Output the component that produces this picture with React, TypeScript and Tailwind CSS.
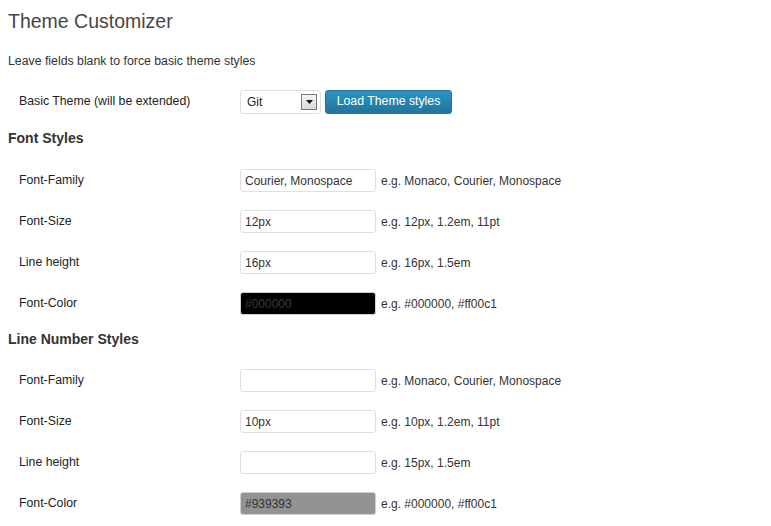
import React from 'react';

type Field = {
  label: string;
  value: string;
  hint: string;
  color?: 'black' | 'gray';
};

const fontStyles: Field[] = [
  { label: 'Font-Family', value: 'Courier, Monospace', hint: 'e.g. Monaco, Courier, Monospace' },
  { label: 'Font-Size', value: '12px', hint: 'e.g. 12px, 1.2em, 11pt' },
  { label: 'Line height', value: '16px', hint: 'e.g. 16px, 1.5em' },
  { label: 'Font-Color', value: '#000000', hint: 'e.g. #000000, #ff00c1', color: 'black' },
];

const lineNumberStyles: Field[] = [
  { label: 'Font-Family', value: '', hint: 'e.g. Monaco, Courier, Monospace' },
  { label: 'Font-Size', value: '10px', hint: 'e.g. 10px, 1.2em, 11pt' },
  { label: 'Line height', value: '', hint: 'e.g. 15px, 1.5em' },
  { label: 'Font-Color', value: '#939393', hint: 'e.g. #000000, #ff00c1', color: 'gray' },
];

const FieldRow = ({ field }: { field: Field }) => {
  let inputClass = 'bg-white border-[#dfdfdf] text-[#333]';
  if (field.color === 'black') inputClass = 'bg-black border-[#cfcfcf] text-[#3a3a3a]';
  if (field.color === 'gray') inputClass = 'bg-[#939393] border-[#cfcfcf] text-[#333]';

  return (
    <div className="flex items-center h-[41px]">
      <div className="w-[232px] pl-[11px] text-[12.3px] text-[#222]">{field.label}</div>
      <input
        type="text"
        defaultValue={field.value}
        className={`w-[136px] h-[23px] px-[4px] border rounded-[3px] outline-none text-[12px] ${inputClass}`}
      />
      <span className="ml-[5px] text-[#333]">{field.hint}</span>
    </div>
  );
};

const App = () => {
  return (
    <div
      className="min-h-screen bg-white px-[8px] text-[12px] text-[#333]"
      style={{ fontFamily: '"Liberation Sans", Arial, sans-serif' }}
    >
      <h2 className="pt-[9px] text-[19.5px] leading-[24px] text-[#464646]">Theme Customizer</h2>
      <p className="mt-[20px] leading-[16px] text-[12.3px]">Leave fields blank to force basic theme styles</p>

      <div className="flex items-center h-[41px] mt-[12px]">
        <div className="w-[232px] pl-[11px] text-[12.3px] text-[#222]">Basic Theme (will be extended)</div>
        <div className="flex items-center justify-between w-[81px] h-[24px] pl-[6px] pr-[3px] border border-[#dfdfdf] rounded-[3px] bg-white">
          <span className="text-[#222]">Git</span>
          <span className="flex items-center justify-center w-[16px] h-[16px] border border-[#777] bg-gradient-to-b from-[#f4f4f4] to-[#d9d9d9]">
            <svg width="7" height="4" viewBox="0 0 7 4">
              <path d="M0 0h7L3.5 4z" fill="#111" />
            </svg>
          </span>
        </div>
        <button className="ml-[4px] h-[24px] w-[127px] rounded-[3px] border border-[#21759b] bg-gradient-to-b from-[#2a95c5] to-[#21759b] text-white text-[12.3px]">
          Load Theme styles
        </button>
      </div>

      <h3 className="h-[38px] pt-[8px] text-[14px] leading-[17px] font-bold text-[#333]">Font Styles</h3>
      {fontStyles.map((f) => (
        <FieldRow key={f.label} field={f} />
      ))}

      <h3 className="h-[36px] pt-[7px] text-[14px] leading-[17px] font-bold text-[#333]">Line Number Styles</h3>
      {lineNumberStyles.map((f) => (
        <FieldRow key={f.label} field={f} />
      ))}
    </div>
  );
};

export default App;
